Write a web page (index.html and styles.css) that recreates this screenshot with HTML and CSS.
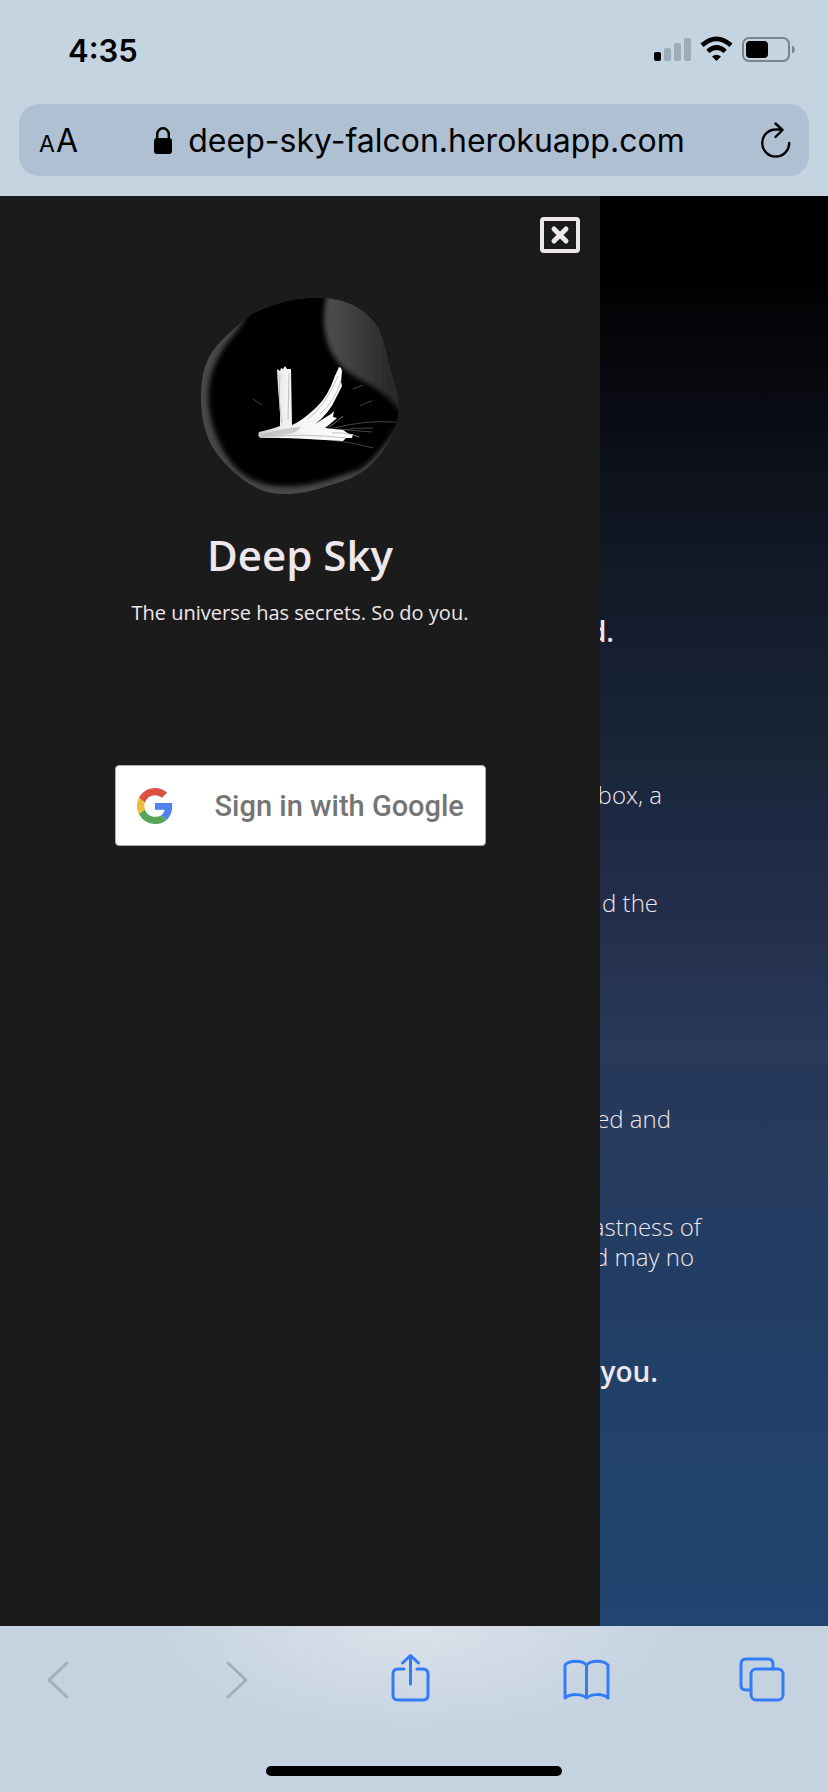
FILE: index.html
```html
<!DOCTYPE html>
<html lang="en">
<head>
<meta charset="utf-8">
<meta name="viewport" content="width=device-width, initial-scale=1">
<title>Deep Sky</title>
<link rel="stylesheet" href="styles.css">
</head>
<body>
<div class="screen">
  <header class="chrome">
    <div class="status">
      <time class="clock">4:35</time>
      <svg class="status-icons" viewBox="0 0 142 28" aria-hidden="true">
        <rect x="0" y="16" width="7" height="9" rx="2"/>
        <g fill="#9eabb8"><rect x="10" y="12" width="7" height="13" rx="2"/><rect x="20" y="7" width="7" height="18" rx="2"/><rect x="30" y="2" width="7" height="23" rx="2"/></g>
        <g fill="none" stroke="#000" stroke-width="4.6"><path d="M48 9.2Q62.500-3.600 77 9.200"/><path d="M53.800 15.400Q62.500 7.600 71.200 15.400"/></g>
        <path d="M58 20.500Q62.500 16.800 67 20.500L62.500 25Z"/>
        <rect x="89" y="2" width="46" height="23" rx="6" fill="none" stroke="#78838d" stroke-width="2"/>
        <rect x="92" y="5" width="22" height="17" rx="4"/>
        <path d="M138 9.500Q141 11 141 13.500T138 17.500Z" fill="#78838d"/>
      </svg>
    </div>
    <div class="address">
      <button class="text-size" aria-label="Text size"><span class="small-a">A</span>A</button>
      <div class="url">
        <svg class="lock" viewBox="0 0 18 27" aria-hidden="true"><rect y="11" width="18" height="16" rx="3"/><path d="M3.200 12V7.500a5.800 6.200 0 0 1 11.600 0V12" fill="none" stroke="#000" stroke-width="2.400"/></svg>
        <span>deep-sky-falcon.herokuapp.com</span>
      </div>
      <button class="reload" aria-label="Reload"><svg viewBox="0 0 30 36" fill="none" stroke="#000" stroke-width="2.400" stroke-linecap="round" stroke-linejoin="round"><path d="M28.200 21A13.500 13.500 0 1 1 14.700 7.500H21M14.500 1.500L21.500 8L14.500 15"/></svg></button>
    </div>
  </header>

  <main class="page">
    <article class="story">
      <h2 class="lead end-1">d.</h2>
      <p class="end-3">box, a</p>
      <p class="end-2">d the</p>
      <p class="end-4 after-break">ed and</p>
      <p class="end-5">astness of</p>
      <p class="end-6 same">d may no</p>
      <h3 class="closing end-2">you.</h3>
    </article>
    <aside class="drawer">
      <button class="close" aria-label="Close menu"><svg viewBox="0 0 40 36" fill="none" stroke="#eee7ec"><rect x="2" y="2" width="36" height="32" rx="2" stroke-width="4"/><path d="M14 12L26 24M26 12L14 24" stroke-width="5" stroke-linecap="round"/></svg></button>
      <svg class="logo" viewBox="0 0 200 200" role="img" aria-label="Deep Sky logo">
        <defs>
          <clipPath id="disc"><path d="M51 18C75 7 98 0 126 2C149 4 167 14 178 32C186 50 188 68 193 83C199 100 201 116 196 129C192 143 183 156 171 169C158 181 142 186 124 191C105 198 83 200 67 196C47 190 27 172 15 155C5 141 1 119 1 104C1 91 1 77 9 61C19 43 36 32 51 18Z"/></clipPath>
          <filter id="soft" x="-20%" y="-20%" width="140%" height="140%"><feGaussianBlur stdDeviation="2.500"/></filter>
          <linearGradient id="glow" x1="0" x2="1"><stop stop-color="#505050"/><stop offset=".8" stop-color="#292929"/></linearGradient>
          <linearGradient id="paint" x1="0" x2="1"><stop stop-color="#ccc"/><stop offset=".3" stop-color="#f2f2f2"/><stop offset="1" stop-color="#fff"/></linearGradient>
        </defs>
        <g clip-path="url(#disc)">
          <path fill="#484848" d="M0 0H200V200H0Z"/>
          <path filter="url(#soft)" d="M48 14C75 0 99-8 134-5C150 20 196 80 205 120C191 140 177 163 159 174C137 181 117 188 98 190C76 192 56 188 43 178C24 164 12 135 9 112C6 88 13 68 25 50C34 38 44 28 48 14Z"/>
          <path filter="url(#soft)" fill="url(#glow)" d="M130-10C121 13 121 44 137 65C151 85 184 88 202 119L210 80L180-10Z"/>
        </g>
        <g fill="none" stroke="#555" stroke-width=".8"><path d="M53 103l9 6M153 93l10-4M160 110q6-4 12-5M130 133q32-9 66-7M133 136q20-5 40-4M137 133l35 3M80 142q55-1 93 10"/></g>
        <path fill="url(#paint)" d="M77 73l3 2 1-3 2 1 2-3 2 3 4 0 1 56q9-4 18-12 14-11 21-27 4-11 8-19l2 1 1 3-1 11 1 4-5 10q-8 18-22 28l16-10 3-3-1 6 4 1-7 6-5 4 18 2 6 4 4 0-1 4-6 0-3 3-54-3-28 0q-4-1-2-6 13-3 21-6l0-13-2-25Z"/>
        <g fill="none" stroke="#aaa" stroke-width=".7"><path d="M80 78q-2 28 2 49M89 77l-1 47M138 80q-12 29-30 43M141 84q-6 22-21 34M61 141q45-4 85 1M129 131q10-7 14-11M132 137q16-1 27 4"/></g>
        <path fill="#aaa" opacity=".55" d="M63 138q20-6 38-7-5 6-12 7-15 2-29 2Z"/>
      </svg>
      <h1 class="brand">Deep Sky</h1>
      <p class="tagline">The universe has secrets. So do you.</p>
      <button class="google">
        <svg viewBox="0 0 48 48" aria-hidden="true"><path fill="#db5144" d="M24 9.500c3.540 0 6.710 1.220 9.210 3.600l6.850-6.850C35.900 2.380 30.470 0 24 0 14.620 0 6.510 5.380 2.560 13.220l7.980 6.190C12.430 13.720 17.740 9.500 24 9.500z"/><path fill="#4f84ee" d="M46.980 24.550c0-1.570-.15-3.090-.38-4.550H24v9.020h12.940c-.58 2.960-2.260 5.480-4.780 7.180l7.730 6c4.510-4.180 7.090-10.360 7.090-17.650z"/><path fill="#f0bd3b" d="M10.530 28.590a14.500 14.500 0 0 1 0-9.180l-7.980-6.190a24 24 0 0 0 0 21.560l7.980-6.190z"/><path fill="#56a55a" d="M24 48c6.480 0 11.930-2.130 15.890-5.810l-7.730-6c-2.150 1.450-4.920 2.300-8.160 2.300-6.260 0-11.570-4.220-13.470-9.910l-7.980 6.190C6.510 42.620 14.620 48 24 48z"/></svg>
        <span>Sign in with Google</span>
      </button>
    </aside>
  </main>

  <footer class="toolbar">
    <nav class="actions" aria-label="Browser">
      <button class="muted" aria-label="Back"><svg viewBox="0 0 48 52"><path d="M33 9L15 26L33 43"/></svg></button>
      <button class="muted" aria-label="Forward"><svg viewBox="0 0 48 52"><path d="M18 9L36 26L18 43"/></svg></button>
      <button aria-label="Share"><svg viewBox="0 0 48 52"><path d="M18 15H12Q7 15 7 20V41Q7 46 12 46H37Q42 46 42 41V20Q42 15 37 15H31M24.500 30V2M16.500 9L24.500 1.500L32.500 9"/></svg></button>
      <button aria-label="Bookmarks"><svg viewBox="0 0 48 52"><path d="M24.500 44V11C20 6 8 6 3 11V44C9 39 20 40 24.500 44C29 40 40 39 46 44V11C41 6 29 6 24.500 11"/></svg></button>
      <button aria-label="Tabs"><svg viewBox="0 0 48 52"><rect x="13" y="15" width="32" height="31" rx="5"/><path d="M13 36H8Q3 36 3 31V10Q3 5 8 5H30Q35 5 35 10V15"/></svg></button>
    </nav>
    <div class="home-bar"></div>
  </footer>
</div>
</body>
</html>
```
FILE: styles.css
```css
* { box-sizing: border-box; margin: 0; }
body { font-family: "Open Sans", sans-serif; color: #eee7ec; }
button { border: 0; padding: 0; background: none; font: inherit; color: inherit; display: flex; align-items: center; }
svg { display: block; }
.screen { min-height: 100vh; display: flex; flex-direction: column; }

.chrome { background: #c5d4e1; color: #000; font-family: Inter, sans-serif; padding: 0 19px 20px; }
.status { height: 104px; display: flex; align-items: center; justify-content: space-between; padding: 0 13px 4px 49px; }
.clock { font-size: 31px; font-weight: 600; }
.status-icons { width: 142px; height: 28px; }
.address { height: 72px; display: flex; align-items: center; justify-content: space-between; padding: 0 18px 0 20px; border-radius: 20px; background: #aec0d2; }
.text-size { font-size: 32px; align-items: baseline; gap: 1px; }
.small-a { font-size: 23px; }
.url { display: flex; align-items: center; gap: 16px; font-size: 32px; }
.lock { width: 18px; height: 27px; }
.reload svg { width: 30px; height: 36px; }

.page { flex: 1; display: grid; grid-template-columns: 600px 1fr; background: linear-gradient(#000 0%, #010102 6%, #0e121c 20%, #141d2d 30%, #1a2736 40%, #1c2740 42%, #263352 55%, #283959 59%, #263a5c 68%, #233c62 72%, #224067 82%, #1f4570 100%); }
.story { grid-area: 1 / 1 / 2 / 3; padding-top: 416px; font-size: 24px; line-height: 30px; font-weight: 300; }
.story > * { text-align: right; margin-bottom: 78px; }
.story .lead { font-size: 28px; line-height: 38px; font-weight: 600; margin-bottom: 130px; }
.story .after-break { margin-top: 186px; }
.story .same { margin-top: -78px; }
.story .closing { font-size: 28px; line-height: 38px; font-weight: 600; margin-top: 80px; }
.end-1 { width: 614px; }
.end-2 { width: 658px; }
.end-3 { width: 662px; }
.end-4 { width: 671px; }
.end-5 { width: 701px; }
.end-6 { width: 694px; }

.drawer { grid-area: 1 / 1 / 2 / 2; background: #1b1b1b; display: flex; flex-direction: column; align-items: center; padding: 21px 20px; }
.close { align-self: flex-end; }
.close svg { width: 40px; height: 36px; }
.logo { width: 200px; height: 200px; margin-top: 43px; }
.brand { font-size: 42px; line-height: 56px; font-weight: 600; margin-top: 31px; }
.tagline { font-size: 20px; line-height: 28px; font-weight: 400; margin-top: 16px; }
.google { width: 371px; height: 81px; margin-top: 138px; padding-left: 21px; gap: 42px; background: #fff; border: 1px solid #aaa; border-radius: 4px; color: #757575; font-family: Roboto, sans-serif; font-size: 29px; font-weight: 500; }
.google svg { width: 36px; height: 36px; }

.toolbar { height: 166px; background: radial-gradient(ellipse 260px 110px at 50% 0, #dbe1ea, #c5d3e0); display: flex; flex-direction: column; align-items: center; justify-content: space-between; padding: 28px 0 16px; }
.actions { width: 100%; display: flex; justify-content: space-between; padding: 0 42px 0 34px; color: #347cf7; }
.actions svg { width: 48px; height: 52px; fill: none; stroke: currentColor; stroke-width: 3; stroke-linecap: round; stroke-linejoin: round; }
.actions .muted { color: #a5adb5; }
.home-bar { width: 296px; height: 10px; border-radius: 5px; background: #000; }
```
